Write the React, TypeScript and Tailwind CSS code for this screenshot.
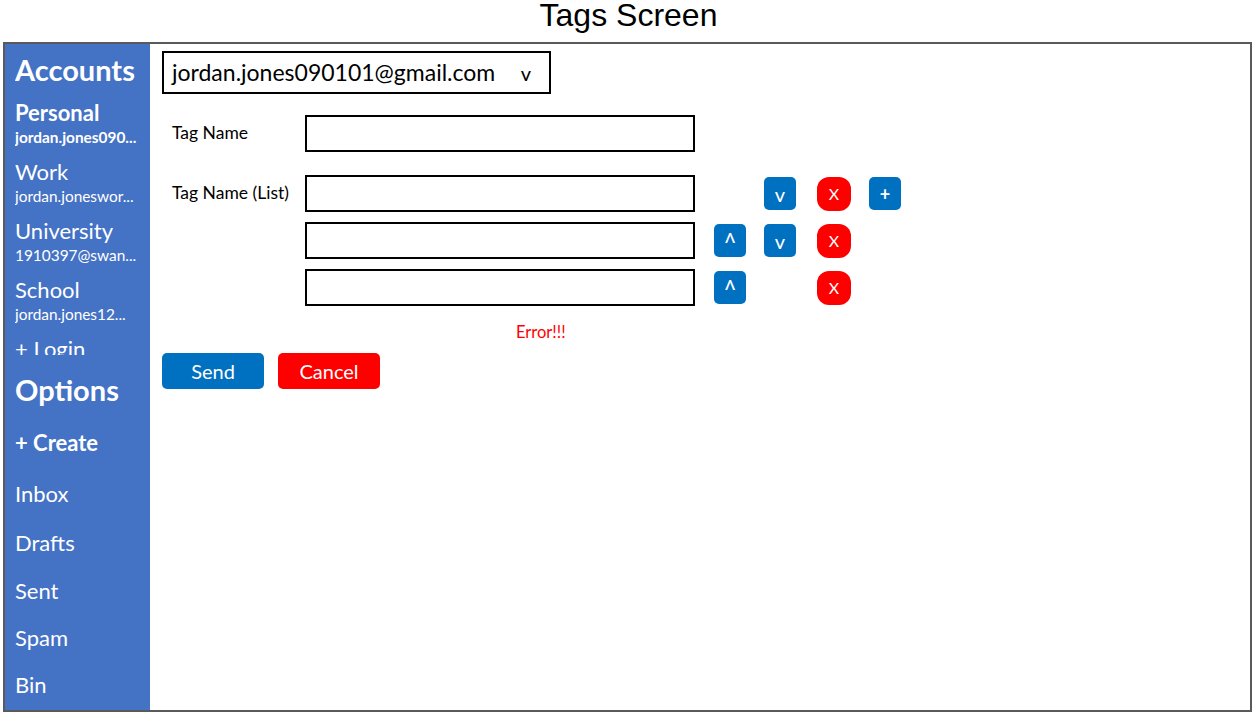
import React from "react";

const ui = { fontFamily: "Lato, 'Noto Sans', sans-serif" };

function BlueBtn({ dir }: { dir: "up" | "down" | "plus" }) {
  return (
    <div className="w-[32px] h-[33px] rounded-[5px] bg-[#0070C0] text-white flex items-center justify-center text-[20px]">
      {dir === "plus" ? (
        <span className="leading-none font-bold text-[18px]">+</span>
      ) : (
        <span className={"leading-none inline-block " + (dir === "up" ? "rotate-180" : "")}>v</span>
      )}
    </div>
  );
}

function RedX() {
  return (
    <div className="w-[34px] h-[34px] rounded-[12px] bg-[#FF0000] text-white flex items-center justify-center text-[16px]">
      X
    </div>
  );
}

function Slot({ w, children }: { w: string; children?: React.ReactNode }) {
  return <div className={w + " flex items-center justify-center"}>{children}</div>;
}

function Row({
  label,
  up,
  down,
  x,
  plus,
}: {
  label?: string;
  up?: boolean;
  down?: boolean;
  x?: boolean;
  plus?: boolean;
}) {
  return (
    <div className="flex items-center">
      <div className="w-[143px] pl-[10px] text-[17.5px] text-black">{label}</div>
      <div className="w-[390px] h-[37px] border-2 border-black" />
      <div className="w-[19px]" />
      <Slot w="w-[32px]">{up && <BlueBtn dir="up" />}</Slot>
      <div className="w-[18px]" />
      <Slot w="w-[32px]">{down && <BlueBtn dir="down" />}</Slot>
      <div className="w-[21px]" />
      <Slot w="w-[34px]">{x && <RedX />}</Slot>
      <div className="w-[18px]" />
      <Slot w="w-[32px]">{plus && <BlueBtn dir="plus" />}</Slot>
    </div>
  );
}

function Account({ name, sub, bold }: { name: string; sub: string; bold?: boolean }) {
  return (
    <div className="flex flex-col">
      <div className={"text-[22px] leading-[28px] " + (bold ? "font-bold" : "")}>{name}</div>
      <div className={"text-[15.4px] leading-[20px] " + (bold ? "font-bold" : "")}>{sub}</div>
    </div>
  );
}

export default function App() {
  return (
    <div className="w-[1256px] h-[714px] bg-white relative overflow-hidden">
      <div
        className="h-[42px] flex items-start justify-center text-[32px] leading-[30px] text-black"
        style={{ fontFamily: "'Liberation Sans', Arial, sans-serif" }}
      >
        <span className="pl-[1px]">Tags Screen</span>
      </div>
      <div className="ml-[3px] w-[1249px] h-[670px] border-2 border-[#5a5a5a] flex" style={ui}>
        <div className="w-[145px] h-full bg-[#4472C4] text-white flex flex-col pl-[10px]">
          <div className="h-[311px] overflow-hidden flex flex-col">
            <div className="text-[29px] font-bold leading-[34px] mt-[9px]">Accounts</div>
            <div className="mt-[12px] flex flex-col gap-[11px]">
              <Account name="Personal" sub="jordan.jones090..." bold />
              <Account name="Work" sub="jordan.joneswor..." />
              <Account name="University" sub="1910397@swan..." />
              <Account name="School" sub="jordan.jones12..." />
              <div className="text-[22px] leading-[28px]">+ Login</div>
            </div>
          </div>
          <div className="text-[29px] font-bold leading-[34px] mt-[18px]">Options</div>
          <div className="text-[22px] font-bold leading-[24px] mt-[24px]">+ Create</div>
          <div className="text-[22px] leading-[24px] mt-[27px]">Inbox</div>
          <div className="text-[22px] leading-[24px] mt-[25px]">Drafts</div>
          <div className="text-[22px] leading-[24px] mt-[24px]">Sent</div>
          <div className="text-[22px] leading-[24px] mt-[23px]">Spam</div>
          <div className="text-[22px] leading-[24px] mt-[23px]">Bin</div>
        </div>
        <div className="flex-1 flex flex-col pl-[12px] pt-[7px]">
          <div className="w-[389px] h-[43px] border-2 border-black flex items-center pl-[8px] pr-[18px] justify-between text-[23px] text-black">
            <span>jordan.jones090101@gmail.com</span>
            <span className="text-[20px]">v</span>
          </div>
          <div className="mt-[21px]">
            <Row label="Tag Name" />
          </div>
          <div className="mt-[23px] flex flex-col gap-[10px]">
            <Row label="Tag Name (List)" down x plus />
            <Row up down x />
            <Row up x />
          </div>
          <div className="pl-[354px] mt-[16px] text-[16.5px] text-[#FF0000] leading-[20px]">Error!!!</div>
          <div className="mt-[11px] flex gap-[14px]">
            <div className="w-[102px] h-[36px] rounded-[5px] bg-[#0070C0] text-white text-[20px] flex items-center justify-center">
              Send
            </div>
            <div className="w-[102px] h-[36px] rounded-[5px] bg-[#FF0000] text-white text-[20px] flex items-center justify-center">
              Cancel
            </div>
          </div>
        </div>
      </div>
    </div>
  );
}
